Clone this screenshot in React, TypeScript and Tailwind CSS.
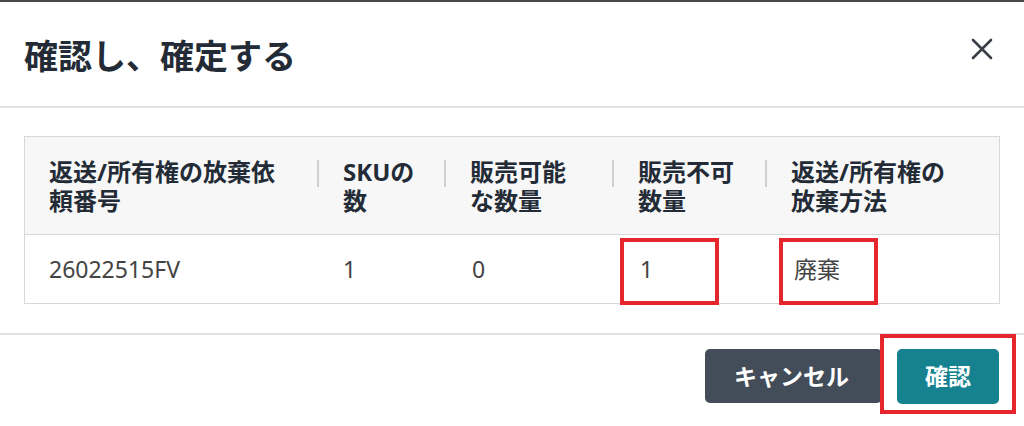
import React from "react";

const font = { fontFamily: '"Noto Sans", "Noto Sans CJK JP", sans-serif' };

function HeaderCell({ lines, width, first }: { lines: string[]; width: string; first?: boolean }) {
  return (
    <div className={`${width} flex items-start`}>
      {first ? (
        <div className="w-[24px]" />
      ) : (
        <div className="mt-[3px] mr-[24px] h-[27px] w-[2px] shrink-0 bg-[#d0d0d0]" />
      )}
      <div className="text-[24px] font-bold leading-[29px] text-[#232b36]">
        {lines.map((l, i) => (
          <div key={i} className="whitespace-nowrap">{l}</div>
        ))}
      </div>
    </div>
  );
}

function BodyCell({ text, width, pl, box }: { text: string; width: string; pl: string; box?: string }) {
  return (
    <div className={`${width} relative flex h-full items-center ${pl}`}>
      <span className="text-[23px] leading-[29px] text-[#444]">{text}</span>
      {box && <div className={`pointer-events-none absolute top-[3px] bottom-[-2px] w-[99px] border-[4px] border-[#e5262c] ${box}`} />}
    </div>
  );
}

export default function App() {
  return (
    <div style={font} className="flex h-[426px] w-[1024px] flex-col overflow-hidden border-t-2 border-[#4a4a4a] bg-white">
      <div className="flex h-[106px] shrink-0 items-center justify-between border-b-2 border-[#e1e1e1] pl-[24px] pr-[31px]">
        <h1 className="mt-[4px] text-[34px] font-bold leading-[40px] text-[#232b36]">確認し、確定する</h1>
        <svg width="22" height="22" viewBox="0 0 22 22" className="mt-[-10px]">
          <path d="M2 2 L20 20 M20 2 L2 20" stroke="#3a3f47" strokeWidth="2.6" strokeLinecap="round" />
        </svg>
      </div>

      <div className="px-[24px] pt-[28px] pb-[29px]">
        <div className="border border-[#d8d8d8]">
          <div className="flex h-[98px] items-center border-b border-[#d8d8d8] bg-[#f7f7f7]">
            <HeaderCell first width="w-[292px]" lines={["返送/所有権の放棄依", "頼番号"]} />
            <HeaderCell width="w-[127px]" lines={["SKUの", "数"]} />
            <HeaderCell width="w-[168px]" lines={["販売可能", "な数量"]} />
            <HeaderCell width="w-[153px]" lines={["販売不可", "数量"]} />
            <HeaderCell width="flex-1" lines={["返送/所有権の", "放棄方法"]} />
          </div>
          <div className="flex h-[68px] items-center">
            <BodyCell width="w-[292px]" pl="pl-[24px]" text="26022515FV" />
            <BodyCell width="w-[127px]" pl="pl-[26px]" text="1" />
            <BodyCell width="w-[168px]" pl="pl-[28px]" text="0" />
            <BodyCell width="w-[153px]" pl="pl-[28px]" text="1" box="left-[8px]" />
            <BodyCell width="flex-1" pl="pl-[29px]" text="廃棄" box="left-[14px]" />
          </div>
        </div>
      </div>

      <div className="flex justify-end gap-[15px] border-t-2 border-[#e1e1e1] pt-[14px] pr-[25px]">
        <button className="h-[54px] rounded-[5px] bg-[#434c59] pl-[29px] pr-[33px] text-[23px] font-bold text-white">
          キャンセル
        </button>
        <div className="relative">
          <button className="h-[55px] rounded-[5px] bg-[#17828f] px-[28px] text-[23px] font-bold text-white">
            確認
          </button>
          <div className="pointer-events-none absolute top-[-15px] bottom-[-10px] left-[-17px] right-[-17px] border-[4px] border-[#e5262c]" />
        </div>
      </div>
    </div>
  );
}
